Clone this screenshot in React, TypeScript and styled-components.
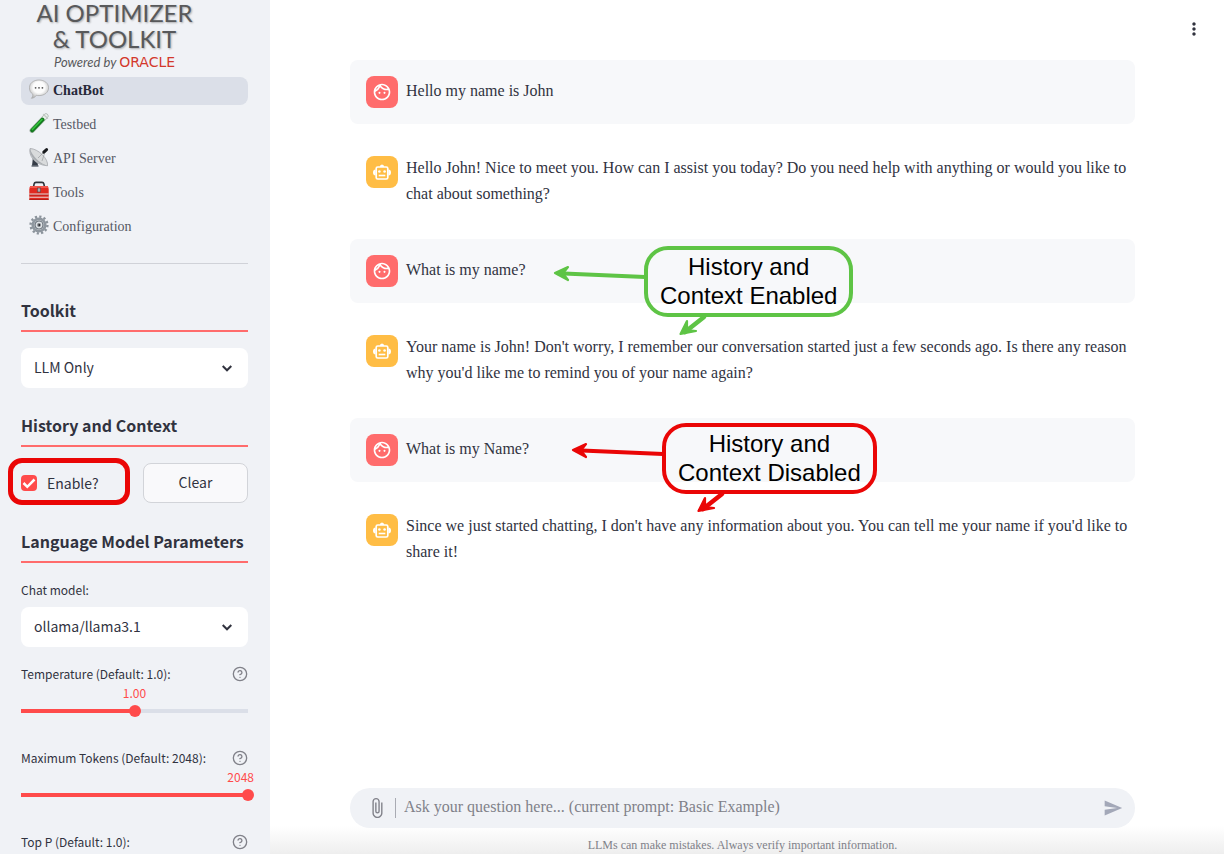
import React, { useState } from "react";
import styled, { createGlobalStyle } from "styled-components";
import { MdAttachFile, MdMoreVert, MdOutlineFace, MdSend } from "react-icons/md";
import { CircleHelp } from "lucide-react";

const sans = `"Noto Sans CJK SC", "Open Sans", sans-serif`;
const serif = `"Liberation Serif", "Times New Roman", serif`;
const ink = "#31333f";
const coral = "#ff4b4b";

const GlobalStyle = createGlobalStyle`
  *, *::before, *::after { box-sizing: border-box; }
  body { margin: 0; background: #fff; color: ${ink}; font-family: ${sans}; }
  button, input, select { font: inherit; color: inherit; margin: 0; }
`;

const Page = styled.div`
  display: flex;
  height: 100vh;
  overflow: hidden;
`;

/* ---------- sidebar ---------- */

const Sidebar = styled.aside`
  flex: 0 0 270px;
  padding: 0 22px 0 21px;
  background: #f0f2f6;
  overflow: hidden;
`;

const Logo = styled.div`
  display: flex;
  flex-direction: column;
  align-items: center;
  height: 77px;
  padding-right: 40px;
  color: #58595b;
  font-family: Lato, sans-serif;
  font-size: 24px;
  line-height: 26px;
  text-shadow: 1px 1px 2px #0000004d;
  white-space: nowrap;
`;

const Powered = styled.span`
  font-size: 13px;
  line-height: 20px;
  font-style: italic;
  text-shadow: none;
`;

const Brand = styled.b`
  font: 400 14px/20px "DejaVu Sans", sans-serif;
  color: #d3382c;
`;

const Nav = styled.nav`
  display: flex;
  flex-direction: column;
  gap: 6px;
  padding-bottom: 22px;
  border-bottom: 1px solid #d0d2d8;
`;

const NavLink = styled.a<{ $active?: boolean }>`
  display: flex;
  align-items: center;
  gap: 4px;
  height: 28px;
  padding: 0 8px;
  border-radius: 8px;
  background: ${(p) => (p.$active ? "#dbdfe8" : "transparent")};
  color: ${(p) => (p.$active ? "#262838" : "#565864")};
  font: ${(p) => (p.$active ? 700 : 400)} 14px/20px ${serif};
  text-decoration: none;
  svg { flex: none; margin-top: -4px; }
`;

const Heading = styled.h2<{ $first?: boolean }>`
  margin: ${(p) => (p.$first ? 34 : 25)}px 0 16px;
  padding-bottom: 8px;
  border-bottom: 2px solid #ff6c6c;
  font-size: 16px;
  line-height: 24px;
  font-weight: 700;
  white-space: nowrap;
`;

const SelectBox = styled.div`
  display: grid;
  align-items: center;
  svg {
    grid-area: 1 / 1;
    justify-self: end;
    margin-right: 16px;
    pointer-events: none;
  }
`;

const Select = styled.select`
  grid-area: 1 / 1;
  width: 100%;
  height: 40px;
  padding: 0 13px 2px;
  border: 0;
  border-radius: 8px;
  background: #fff;
  font-size: 14px;
  appearance: none;
`;

const HistoryRow = styled.div`
  display: flex;
  gap: 17px;
  margin-bottom: 26px;
`;

const EnableLabel = styled.label`
  position: relative;
  display: flex;
  flex: 1;
  align-items: center;
  gap: 10px;
  font-size: 14px;
`;

const EnableMark = styled.span`
  position: absolute;
  inset: -5px -4px -2px -13px;
  border: 5px solid #ea0606;
  border-radius: 14px;
  pointer-events: none;
`;

const CheckBox = styled.span`
  display: grid;
  svg { grid-area: 1 / 1; pointer-events: none; }
`;

const CheckInput = styled.input`
  grid-area: 1 / 1;
  width: 16px;
  height: 16px;
  border-radius: 4px;
  background: #fff;
  appearance: none;
  &:checked { background: ${coral}; }
`;

const ClearButton = styled.button`
  flex: 0 0 105px;
  height: 40px;
  padding: 0 0 2px;
  border: 1px solid #d2d4d9;
  border-radius: 8px;
  background: #f9f9fb;
  font-size: 14px;
`;

const FieldLabel = styled.label`
  display: block;
  font-size: 12px;
  line-height: 20px;
  white-space: nowrap;
`;

const ModelField = styled.div`
  display: flex;
  flex-direction: column;
  gap: 7px;
  margin-bottom: 17px;
  padding-top: 1px;
`;

const SliderField = styled.div`
  height: 84px;
`;

const LabelRow = styled.div`
  display: flex;
  align-items: center;
  justify-content: space-between;
  color: #808189;
  label { color: ${ink}; }
`;

const SliderValue = styled.output<{ $end?: boolean }>`
  display: block;
  margin: 0 -6px;
  text-align: ${(p) => (p.$end ? "right" : "center")};
  color: ${coral};
  font-size: 12px;
  line-height: 18px;
`;

const Range = styled.input`
  display: block;
  width: calc(100% + 12px);
  height: 18px;
  margin: 0 -6px;
  background: none;
  appearance: none;
  &::-webkit-slider-runnable-track {
    height: 4px;
    background:
      linear-gradient(${coral}, ${coral}) 6px 0 / calc((100% - 12px) * var(--fill)) 100% no-repeat,
      linear-gradient(#dbdfe8, #dbdfe8) 6px 0 / calc(100% - 12px) 100% no-repeat;
  }
  &::-webkit-slider-thumb {
    width: 12px;
    height: 12px;
    margin-top: -4px;
    border-radius: 50%;
    background: ${coral};
    appearance: none;
  }
`;

/* ---------- chat ---------- */

const Main = styled.main`
  display: flex;
  flex: 1;
  flex-direction: column;
  min-width: 0;
  padding: 0 89px 0 80px;
  font-family: ${serif};
  background: linear-gradient(to top, #eeeeee, #fff 28px);
`;

const TopBar = styled.header`
  display: flex;
  flex: 0 0 60px;
  align-items: center;
  justify-content: flex-end;
  margin-right: -69px;
  padding-bottom: 2px;
`;

const IconButton = styled.button`
  display: flex;
  padding: 0;
  border: 0;
  background: none;
`;

const Messages = styled.div`
  display: flex;
  flex: 1;
  flex-direction: column;
  gap: 16px;
`;

const Message = styled.article<{ $user?: boolean }>`
  position: relative;
  display: flex;
  align-items: ${(p) => (p.$user ? "center" : "flex-start")};
  gap: 8px;
  padding: 16px ${(p) => (p.$user ? "16px 16px" : "0px 15px 16px")};
  border-radius: 8px;
  background: ${(p) => (p.$user ? "#f7f8fa" : "transparent")};
  p {
    margin: -1px 0 1px;
    font-size: 16px;
    line-height: 26px;
  }
`;

const Avatar = styled.span<{ $user?: boolean }>`
  display: flex;
  flex: 0 0 32px;
  height: 32px;
  align-items: center;
  justify-content: center;
  border-radius: 8px;
  background: ${(p) => (p.$user ? "#ff6c6c" : "#ffbd45")};
  color: #fff;
`;

const CalloutBox = styled.div<{ $left: number; $top: number; $color: string }>`
  position: absolute;
  z-index: 1;
  left: ${(p) => p.$left}px;
  top: ${(p) => p.$top}px;
  padding: 2px 12px 3px;
  border: 4px solid ${(p) => p.$color};
  border-radius: 24px;
  color: #000;
  font: 24px/29px "Liberation Sans", Arial, sans-serif;
  text-align: center;
  white-space: nowrap;
  svg {
    position: absolute;
    left: -104px;
    top: -4px;
    pointer-events: none;
  }
`;

const Composer = styled.form`
  display: flex;
  align-items: center;
  height: 40px;
  padding: 0 12px 0 16px;
  border-radius: 20px;
  background: #f0f2f6;
  color: #808189;
`;

const Prompt = styled.input`
  flex: 1;
  min-width: 0;
  height: 20px;
  margin-left: 7px;
  padding: 0 0 2px 8px;
  border: 0;
  border-left: 1px solid #a9abb3;
  outline: 0;
  background: none;
  font-size: 16px;
  &::placeholder { color: #808189; opacity: 1; }
`;

const SendButton = styled(IconButton)`
  color: #a3a8b8;
`;

const Footnote = styled.footer`
  padding: 10px 0 1px;
  color: #808189;
  font-size: 12px;
  line-height: 15px;
  text-align: center;
`;

/* ---------- drawings ---------- */

const Chevron = () => (
  <svg width="10" height="7" viewBox="0 0 10 7" fill="none" stroke={ink} strokeWidth="2">
    <path d="M.7 1L5 5.300 9.300 1" />
  </svg>
);

const RobotIcon = () => (
  <svg width="20" height="20" viewBox="0 0 20 20" fill="currentColor">
    <rect x="4.200" y="5" width="11.600" height="12" rx="1.500" fill="none" stroke="currentColor" strokeWidth="1.700" />
    <path d="M7.800 5a2.200 2.600 0 0 1 4.400 0z" />
    <path d="M3.600 7.500v6a2.600 3 0 0 1 0-6zM16.400 7.500v6a2.600 3 0 0 0 0-6z" />
    <circle cx="7.400" cy="9.500" r="1.300" />
    <circle cx="12.600" cy="9.500" r="1.300" />
    <rect x="6.700" y="12.700" width="6.600" height="1.600" />
  </svg>
);

const SpeechIcon = () => (
  <svg width="20" height="20" viewBox="0 0 20 20">
    <defs>
      <radialGradient id="speech" cx=".5" cy=".4" r=".6">
        <stop offset=".5" stopColor="#fcfcfc" />
        <stop offset="1" stopColor="#b9b9b9" />
      </radialGradient>
    </defs>
    <path d="M10 1c5.500 0 9.600 3.300 9.600 7.800s-4.100 7.800-9.600 7.800c-1 0-1.800-.1-2.600-.3-1.200 1.700-2.700 2.800-5 3 1.100-1.100 1.500-2.400 1.400-4.100C1.700 13.800.4 11.600.4 8.800.400 4.300 4.500 1 10 1z" fill="url(#speech)" stroke="#a5a5a5" strokeWidth=".7" />
    <g fill="#555"><circle cx="6.600" cy="8.800" r=".9" /><circle cx="10" cy="8.800" r=".9" /><circle cx="13.400" cy="8.800" r=".9" /></g>
  </svg>
);

const TubeIcon = () => (
  <svg width="20" height="20" viewBox="0 0 20 20" strokeLinecap="round">
    <path d="M3 17.500L17 3" stroke="#a9b4ad" strokeWidth="5" />
    <path d="M3.200 17.300L17 3" stroke="#edf3ef" strokeWidth="3.600" />
    <path d="M3.200 17.300L13.500 6.700" stroke="#14791f" strokeWidth="4" />
    <path d="M3.400 16.500L13 6.600" stroke="#35c63c" strokeWidth="1.500" />
    <path d="M14.500 1.500l4 3.800" stroke="#c5cbc8" strokeWidth="1.400" />
  </svg>
);

const DishIcon = () => (
  <svg width="20" height="20" viewBox="0 0 20 20">
    <path d="M4 10l4 3 1 5.500H3z" fill="#353c47" />
    <path d="M2.500 18.500h7v1h-7z" fill="#222a38" />
    <path d="M1 1.500C-.5 8 5 18 18.500 18.800 19.800 12 9 1.500 1 1.500z" fill="#d9dbdc" stroke="#92969b" strokeWidth=".6" />
    <path d="M1 1.500C0 8 6 17 18.500 18.800 12 17 3 9.500 1 1.500z" fill="#a9adb1" />
    <path d="M9 11l7-7M16 5l-3 9" stroke="#9a9da1" strokeWidth=".7" />
    <path d="M14.800 5.200l2.800-2.600" stroke="#191b1e" strokeWidth="3" strokeLinecap="round" />
  </svg>
);

const ToolboxIcon = () => (
  <svg width="20" height="20" viewBox="0 0 20 20">
    <path d="M4.500 6l.6-3Q5.400 1.400 7 1.400h6q1.600 0 1.900 1.600l.6 3" fill="none" stroke="#30343a" strokeWidth="1.600" />
    <path d="M1.200 5h17.600l.9 3v11H.300V8z" fill="#e02a20" />
    <path d="M1.200 5h17.600l.6 2H.6z" fill="#f2574b" />
    <path d="M.3 12.500h19.400v1.200H.300zM.300 15.800h19.400v1H.300z" fill="#e8d5d3" />
    <path d="M.3 13.700h19.400v.6H.300zM.300 18.400h19.400v.6H.300z" fill="#8c120d" />
    <rect x="8.300" y="7" width="3.400" height="4" fill="#a8abae" stroke="#6d3030" strokeWidth=".6" />
  </svg>
);

const GearIcon = () => (
  <svg width="20" height="20" viewBox="0 0 20 20" fill="none">
    <circle cx="10" cy="10" r="8.400" stroke="#8b939b" strokeWidth="2.400" strokeDasharray="2.200 2.198" />
    <circle cx="10" cy="10" r="6.200" stroke="#8f979f" strokeWidth="2.800" />
    <circle cx="10" cy="10" r="4" fill="#dfe3e6" stroke="#68717a" strokeWidth="1.200" />
    <circle cx="10" cy="10" r="1.900" fill="#7e8288" />
    <circle cx="10.300" cy="10" r=".9" fill="#26282b" />
  </svg>
);

const Arrows = ({ color }: { color: string }) => (
  <svg width="180" height="96" viewBox="-100 0 180 96" fill="none" stroke={color} strokeLinecap="round" strokeLinejoin="round">
    <path d="M1 31L-86 27.200" strokeWidth="4" />
    <path d="M-76 21L-89 27l13 7-5-6.700z" strokeWidth="2.200" fill={color} />
    <path d="M60 71L41 86" strokeWidth="4.500" />
    <path d="M43 75L36.500 88 52 85 43 84z" strokeWidth="2.200" fill={color} />
  </svg>
);

/* ---------- composition ---------- */

type Note = { text: [string, string]; color: string; left: number; top: number };
type Entry = { user?: boolean; text: string; note?: Note };

const entries: Entry[] = [
  { user: true, text: "Hello my name is John" },
  { text: "Hello John! Nice to meet you. How can I assist you today? Do you need help with anything or would you like to chat about something?" },
  {
    user: true,
    text: "What is my name?",
    note: { text: ["History and", "Context Enabled"], color: "#5ec445", left: 294, top: 7 },
  },
  { text: "Your name is John! Don't worry, I remember our conversation started just a few seconds ago. Is there any reason why you'd like me to remind you of your name again?" },
  {
    user: true,
    text: "What is my Name?",
    note: { text: ["History and", "Context Disabled"], color: "#ea0606", left: 312, top: 5 },
  },
  { text: "Since we just started chatting, I don't have any information about you. You can tell me your name if you'd like to share it!" },
];

const navItems = [
  { label: "ChatBot", Icon: SpeechIcon },
  { label: "Testbed", Icon: TubeIcon },
  { label: "API Server", Icon: DishIcon },
  { label: "Tools", Icon: ToolboxIcon },
  { label: "Configuration", Icon: GearIcon },
];

type SliderProps = { id: string; label: string; max: number; initial: number; digits: number };

function Slider({ id, label, max, initial, digits }: SliderProps) {
  const [value, setValue] = useState(initial);
  return (
    <SliderField>
      <LabelRow>
        <FieldLabel htmlFor={id}>{label}</FieldLabel>
        <CircleHelp size={16} />
      </LabelRow>
      <SliderValue htmlFor={id} $end={value === max}>{value.toFixed(digits)}</SliderValue>
      <Range
        id={id}
        type="range"
        min={0}
        max={max}
        step={digits ? 0.01 : 1}
        value={value}
        onChange={(e) => setValue(Number(e.target.value))}
        style={{ "--fill": value / max } as React.CSSProperties}
      />
    </SliderField>
  );
}

export default function App() {
  const [enabled, setEnabled] = useState(true);
  return (
    <Page>
      <GlobalStyle />
      <Sidebar>
        <Logo>
          <span>AI OPTIMIZER</span>
          <span>&amp; TOOLKIT</span>
          <Powered>Powered by <Brand>ORACLE</Brand></Powered>
        </Logo>
        <Nav>
          {navItems.map(({ label, Icon }, i) => (
            <NavLink key={label} href="#" $active={i === 0}>
              <Icon />
              {label}
            </NavLink>
          ))}
        </Nav>

        <Heading $first>Toolkit</Heading>
        <SelectBox>
          <Select aria-label="Toolkit"><option>LLM Only</option></Select>
          <Chevron />
        </SelectBox>

        <Heading>History and Context</Heading>
        <HistoryRow>
          <EnableLabel>
            <CheckBox>
              <CheckInput type="checkbox" checked={enabled} onChange={(e) => setEnabled(e.target.checked)} />
              <svg width="16" height="16" viewBox="0 0 16 16" fill="none" stroke="#fff" strokeWidth="2.500">
                <path d="M2.500 8l3.800 3.800L13.500 4.500" />
              </svg>
            </CheckBox>
            Enable?
            <EnableMark />
          </EnableLabel>
          <ClearButton type="button">Clear</ClearButton>
        </HistoryRow>

        <Heading>Language Model Parameters</Heading>
        <ModelField>
          <FieldLabel htmlFor="model">Chat model:</FieldLabel>
          <SelectBox>
            <Select id="model"><option>ollama/llama3.1</option></Select>
            <Chevron />
          </SelectBox>
        </ModelField>
        <Slider id="temperature" label="Temperature (Default: 1.0):" max={2} initial={1} digits={2} />
        <Slider id="tokens" label="Maximum Tokens (Default: 2048):" max={2048} initial={2048} digits={0} />
        <Slider id="top-p" label="Top P (Default: 1.0):" max={1} initial={1} digits={2} />
      </Sidebar>

      <Main>
        <TopBar>
          <IconButton type="button" aria-label="Menu"><MdMoreVert size={20} /></IconButton>
        </TopBar>
        <Messages>
          {entries.map(({ user, text, note }) => (
            <Message key={text} $user={user}>
              <Avatar $user={user}>
                {user ? <MdOutlineFace size={20} /> : <RobotIcon />}
              </Avatar>
              <p>{text}</p>
              {note && (
                <CalloutBox $left={note.left} $top={note.top} $color={note.color}>
                  {note.text[0]}
                  <br />
                  {note.text[1]}
                  <Arrows color={note.color} />
                </CalloutBox>
              )}
            </Message>
          ))}
        </Messages>
        <Composer onSubmit={(e) => e.preventDefault()}>
          <IconButton type="button" aria-label="Attach file"><MdAttachFile size={22} /></IconButton>
          <Prompt aria-label="Question" placeholder="Ask your question here... (current prompt: Basic Example)" />
          <SendButton type="submit" aria-label="Send"><MdSend size={20} /></SendButton>
        </Composer>
        <Footnote>LLMs can make mistakes. Always verify important information.</Footnote>
      </Main>
    </Page>
  );
}
